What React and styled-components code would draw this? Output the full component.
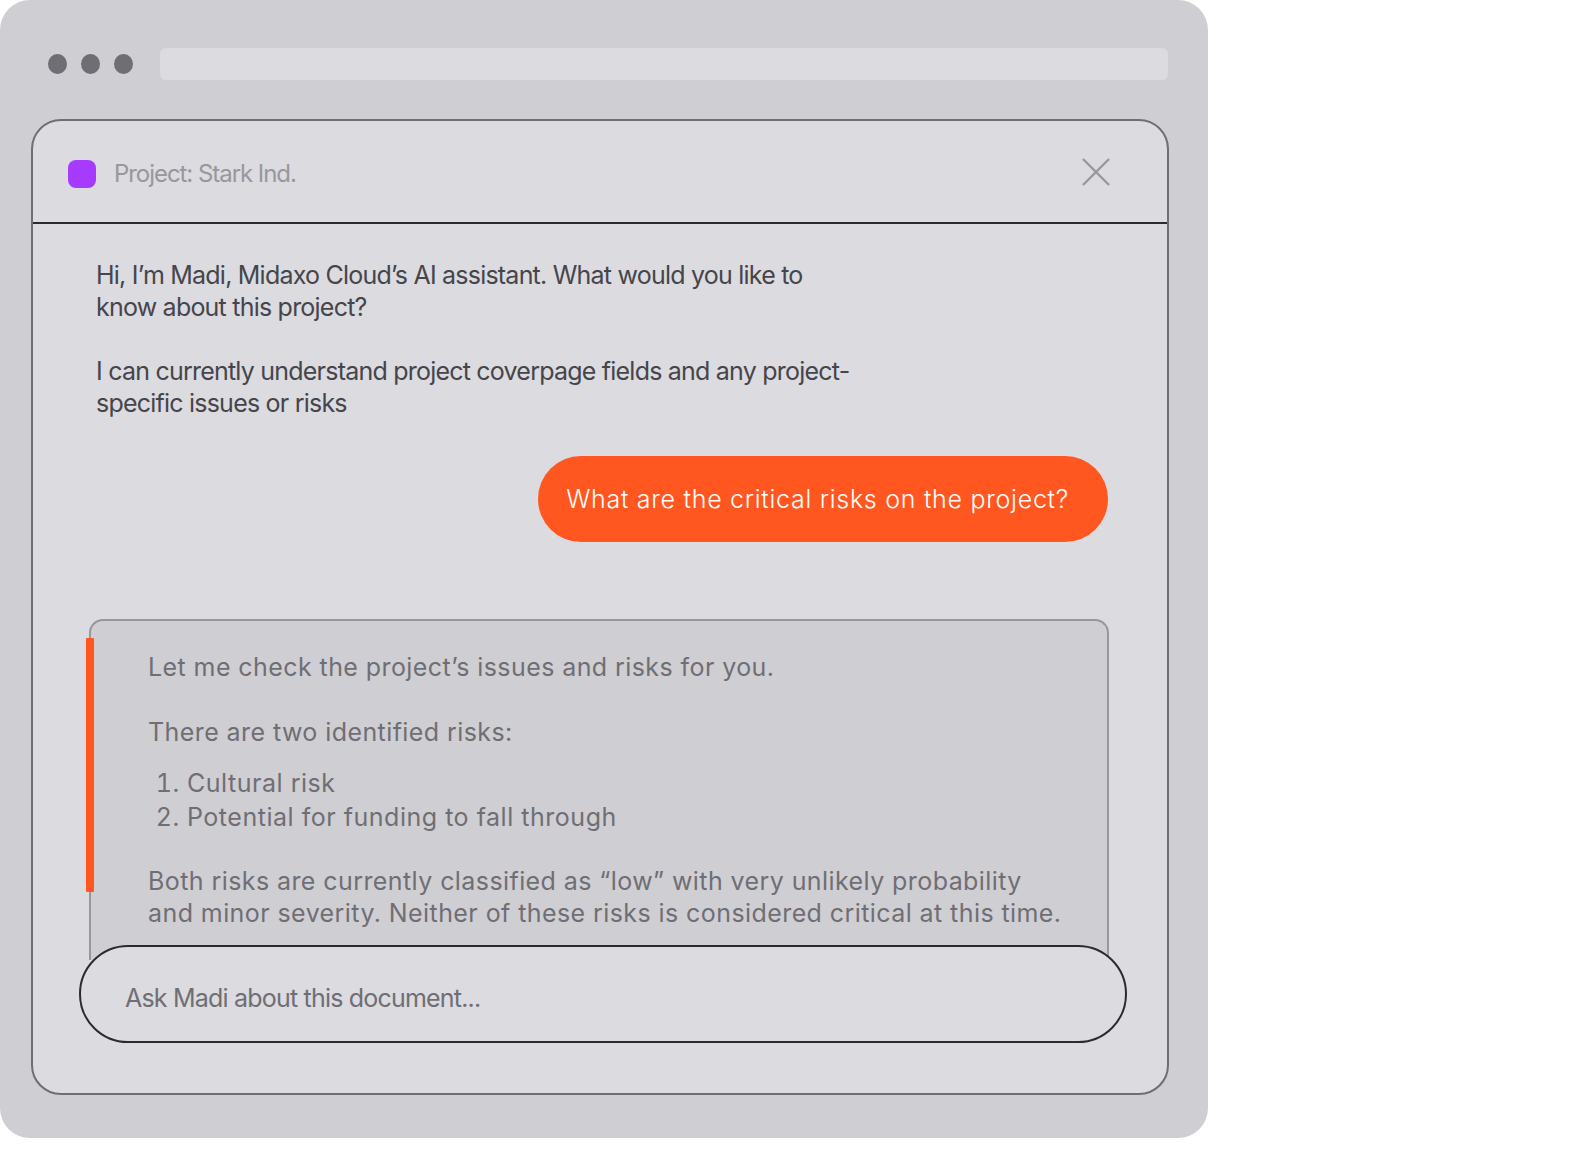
import styled, { createGlobalStyle } from "styled-components";

const GlobalStyle = createGlobalStyle`
    html, body {
        margin: 0;
        background: #ffffff;
    }
    body {
        font-family: Inter, "Liberation Sans", sans-serif;
    }
`

const Page = styled.div`
    width: 1584px;
    height: 1162px;
    overflow: hidden;
`

const Browser = styled.div`
    width: 1208px;
    height: 1138px;
    box-sizing: border-box;
    padding: 48px 39px 0 31px;
    background: #cfced3;
    border-radius: 30px;
`

const Toolbar = styled.div`
    display: flex;
    align-items: center;
    height: 32px;
    padding: 0 1px 0 17px;
    margin-bottom: 39px;
`

const Dots = styled.div`
    display: flex;
    gap: 14.5px;
    margin-right: 27px;
`

const Dot = styled.span`
    width: 18.5px;
    height: 20px;
    border-radius: 50%;
    background: #6f6e74;
`

const AddressBar = styled.div`
    flex: 1;
    height: 32px;
    border-radius: 6px;
    background: #dbdbe0;
`

const Panel = styled.section`
    height: 976px;
    box-sizing: border-box;
    overflow: hidden;
    border: 2px solid #6f6e74;
    border-radius: 30px;
    background: #dbdbe0;
`

const Header = styled.header`
    display: flex;
    align-items: center;
    justify-content: space-between;
    height: 103px;
    box-sizing: border-box;
    padding: 0 56px 0 35px;
    border-bottom: 2px solid #2b2a30;
`

const Project = styled.div`
    display: flex;
    align-items: center;
    gap: 18px;
    padding-top: 5px;
`

const ProjectMark = styled.span`
    width: 28px;
    height: 28px;
    border-radius: 8px;
    background: #a63bff;
`

const ProjectName = styled.span`
    margin-bottom: 2px;
    font-size: 24px;
    letter-spacing: -1.05px;
    color: #98979c;
`

const CloseIcon = styled.svg`
    display: block;
    width: 30px;
    height: 30px;
    margin-top: 1px;
    stroke: #98979c;
    stroke-width: 2.4;
    fill: none;
`

const Conversation = styled.div`
    padding: 35px 58px 0 56px;
`

const Intro = styled.p`
    width: 762px;
    margin: 0 0 32px 7px;
    font-size: 25px;
    line-height: 32px;
    letter-spacing: -0.78px;
    color: #46454b;
`

const Question = styled.div`
    display: flex;
    align-items: center;
    width: fit-content;
    height: 86px;
    box-sizing: border-box;
    margin: 37px 1px 0 auto;
    padding: 0 39px 0 28px;
    border-radius: 43px;
    background: #ff571f;
    color: #ffffff;
    font-size: 25px;
    font-weight: 300;
    letter-spacing: 0.72px;
`

const Answer = styled.div`
    position: relative;
    height: 341px;
    box-sizing: border-box;
    margin-top: 77px;
    padding: 30px 40px 0 57px;
    border: 2px solid #98979c;
    border-bottom: 0;
    border-radius: 14px 14px 0 0;
    background: #cfced3;
    color: #6f6e74;
    font-size: 25px;
    letter-spacing: 0.42px;
`

const AccentBar = styled.span`
    position: absolute;
    left: -5px;
    top: 17px;
    width: 8px;
    height: 254px;
    border-radius: 1px;
    background: #ff571f;
`

const AnswerText = styled.p`
    margin: 0 0 ${({ $gap }) => $gap}px;
    line-height: 32px;
`

const RiskList = styled.ol`
    margin: 0 0 31px;
    padding: 0 0 0 39px;
    line-height: 34px;
    letter-spacing: 0.52px;
`

const InputPill = styled.div`
    position: relative;
    display: flex;
    align-items: center;
    height: 98px;
    box-sizing: border-box;
    margin: -15px -18px 0 -10px;
    padding: 7px 0 0 44px;
    border: 2px solid #2b2a30;
    border-radius: 49px;
    background: #dbdbe0;
    color: #6f6e74;
    font-size: 25px;
    letter-spacing: -0.8px;
`

function App() {
    return (
        <Page>
            <GlobalStyle />
            <Browser>
                <Toolbar>
                    <Dots>
                        <Dot />
                        <Dot />
                        <Dot />
                    </Dots>
                    <AddressBar />
                </Toolbar>

                <Panel>
                    <Header>
                        <Project>
                            <ProjectMark />
                            <ProjectName>Project: Stark Ind.</ProjectName>
                        </Project>
                        <CloseIcon viewBox="0 0 30 30">
                            <path d="M2 2 L28 28 M28 2 L2 28" />
                        </CloseIcon>
                    </Header>

                    <Conversation>
                        <Intro>
                            Hi, I’m Madi, Midaxo Cloud’s AI assistant. What would you like to know about this project?
                        </Intro>
                        <Intro>
                            I can currently understand project coverpage fields and any project-specific issues or risks
                        </Intro>

                        <Question>What are the critical risks on the project?</Question>

                        <Answer>
                            <AccentBar />
                            <AnswerText $gap={33}>Let me check the project’s issues and risks for you.</AnswerText>
                            <AnswerText $gap={18}>There are two identified risks:</AnswerText>
                            <RiskList>
                                <li>Cultural risk</li>
                                <li>Potential for funding to fall through</li>
                            </RiskList>
                            <AnswerText $gap={0}>
                                Both risks are currently classified as “low” with very unlikely probability and minor severity. Neither of these risks is considered critical at this time.
                            </AnswerText>
                        </Answer>

                        <InputPill>Ask Madi about this document...</InputPill>
                    </Conversation>
                </Panel>
            </Browser>
        </Page>
    );
}

export default App;
